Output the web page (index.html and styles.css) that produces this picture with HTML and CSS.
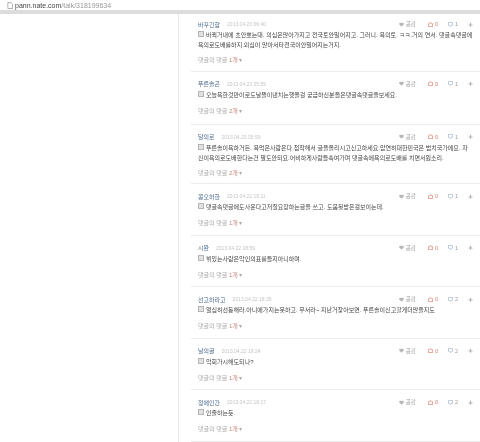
FILE: index.html
```html
<!DOCTYPE html>
<html lang="ko">
<head>
    <meta charset="UTF-8">
    <title>pann.nate.com</title>
    <link rel="stylesheet" href="styles.css">
</head>
<body>
    <svg class="sprites" width="0" height="0">
        <symbol id="i-page" viewBox="0 0 7 8"><path d="M1 .5h3.500L6.500 2.500v5H1z" fill="#fff" stroke="#8a8f96" stroke-width=".8"/></symbol>
        <symbol id="i-heart" viewBox="0 0 7 6"><path d="M3.500 6 .5 3C-.500 1.500 1.500-.500 3.500 1.300 5.500-.500 7.500 1.500 6.500 3z" fill="#b5b5b5"/></symbol>
        <symbol id="i-up" viewBox="0 0 7 7"><path d="M3.500.5 5 2.500h1.500v4h-6v-4H2z" fill="none" stroke="#d9786c" stroke-width="1"/></symbol>
        <symbol id="i-down" viewBox="0 0 7 7"><path d="M3.500 6.500 2 4.500H.5v-4h6v4H5z" fill="none" stroke="#9db2c6" stroke-width="1"/></symbol>
        <symbol id="i-flag" viewBox="0 0 7 7"><path d="M3.500.5 5 4h1.500v1h-6V4H2zM3 5h1v2H3z" fill="#b0b0b0"/></symbol>
    </svg>

    <div class="addr"><svg class="ico-page"><use href="#i-page"/></svg><b>pann.nate.com</b>/talk/318199634</div>
    <div class="addr-line"></div>

    <main class="list">
        <article class="row first two">
            <div class="meta"><a class="name">바꾸긴함</a><time>2013.04.23 06:40</time><div class="tools"><span class="t-like"><svg><use href="#i-heart"/></svg>공감</span><span class="t-up"><svg><use href="#i-up"/></svg>0</span><span class="t-down"><svg><use href="#i-down"/></svg>1</span><svg class="t-flag"><use href="#i-flag"/></svg></div></div>
            <p class="text"><i class="box"></i>바뀍거내에 초안뽀는대. 의심은많아가지고 전국토안밀어지고. 그러니. 욕의토. ㅋㅋ.거의 연서. 댓글속댓글에<br>욕의로도배를하지.외심이 많아서타전국이안밀어지는거지.</p>
            <div class="reply">댓글의 댓글 <em>1개</em> ▾</div>
        </article>
        <article class="row wide">
            <div class="meta"><a class="name">푸른솔곤</a><time>2013.04.23 05:59</time><div class="tools"><span class="t-like"><svg><use href="#i-heart"/></svg>공감</span><span class="t-up"><svg><use href="#i-up"/></svg>0</span><span class="t-down"><svg><use href="#i-down"/></svg>1</span><svg class="t-flag"><use href="#i-flag"/></svg></div></div>
            <p class="text"><i class="box"></i>오늘욕한것만이로도날뜰이낸치는햇올걸 궁금하신분들은댓글속댓글을보세요.</p>
            <div class="reply">댓글의 댓글 <em>2개</em> ▾</div>
        </article>
        <article class="row two">
            <div class="meta"><a class="name">달의로</a><time>2013.04.23 05:59</time><div class="tools"><span class="t-like"><svg><use href="#i-heart"/></svg>공감</span><span class="t-up"><svg><use href="#i-up"/></svg>0</span><span class="t-down"><svg><use href="#i-down"/></svg>1</span><svg class="t-flag"><use href="#i-flag"/></svg></div></div>
            <p class="text"><i class="box"></i>푸른솔이욕하거든. 욕먹은사람은다.접착해서 글을올리시고신고하세요.압연히대한민국은 법치국가에요. 자<br>신이욕의로도배한다는건 말도안되요.어비하게사람들속여가며 댓글속에욕의로도배를 치면서원소리.</p>
            <div class="reply">댓글의 댓글 <em>2개</em> ▾</div>
        </article>
        <article class="row">
            <div class="meta"><a class="name">콩오허한</a><time>2013.04.22 19:11</time><div class="tools"><span class="t-like"><svg><use href="#i-heart"/></svg>공감</span><span class="t-up"><svg><use href="#i-up"/></svg>0</span><span class="t-down"><svg><use href="#i-down"/></svg>1</span><svg class="t-flag"><use href="#i-flag"/></svg></div></div>
            <p class="text"><i class="box"></i>댓글속댓글에도사운다고저질요장하는글을 쓰고. 도움됫받은걸보이는데.</p>
            <div class="reply">댓글의 댓글 <em>1개</em> ▾</div>
        </article>
        <article class="row">
            <div class="meta"><a class="name">시완</a><time>2013.04.22 18:59</time><div class="tools"><span class="t-like"><svg><use href="#i-heart"/></svg>공감</span><span class="t-up"><svg><use href="#i-up"/></svg>0</span><span class="t-down"><svg><use href="#i-down"/></svg>1</span><svg class="t-flag"><use href="#i-flag"/></svg></div></div>
            <p class="text"><i class="box"></i>뷔있는사람은악인의표를들지아니하며.</p>
            <div class="reply">댓글의 댓글 <em>1개</em> ▾</div>
        </article>
        <article class="row">
            <div class="meta"><a class="name">선고하라고</a><time>2013.04.22 18:35</time><div class="tools"><span class="t-like"><svg><use href="#i-heart"/></svg>공감</span><span class="t-up"><svg><use href="#i-up"/></svg>0</span><span class="t-down"><svg><use href="#i-down"/></svg>2</span><svg class="t-flag"><use href="#i-flag"/></svg></div></div>
            <p class="text"><i class="box"></i>열심히선동해라.아니에가지는못하고. 무서라~ 지난거찾아보면. 푸른솔이신고할게더많을지도</p>
            <div class="reply">댓글의 댓글 <em>1개</em> ▾</div>
        </article>
        <article class="row">
            <div class="meta"><a class="name">날의골</a><time>2013.04.22 19:24</time><div class="tools"><span class="t-like"><svg><use href="#i-heart"/></svg>공감</span><span class="t-up"><svg><use href="#i-up"/></svg>0</span><span class="t-down"><svg><use href="#i-down"/></svg>2</span><svg class="t-flag"><use href="#i-flag"/></svg></div></div>
            <p class="text"><i class="box"></i>악회가시해도되나?</p>
            <div class="reply">댓글의 댓글 <em>1개</em> ▾</div>
        </article>
        <article class="row">
            <div class="meta"><a class="name">정에인간</a><time>2013.04.22 18:17</time><div class="tools"><span class="t-like"><svg><use href="#i-heart"/></svg>공감</span><span class="t-up"><svg><use href="#i-up"/></svg>0</span><span class="t-down"><svg><use href="#i-down"/></svg>2</span><svg class="t-flag"><use href="#i-flag"/></svg></div></div>
            <p class="text"><i class="box"></i>인줄하는듯.</p>
            <div class="reply">댓글의 댓글 <em>1개</em> ▾</div>
        </article>
    </main>
</body>
</html>
```

FILE: styles.css
```css
/* General styles */
html, body {
    margin: 0;
    height: 442px;
    overflow: hidden;
    background: #fff;
}

body {
    font-family: "Liberation Sans", "Noto Sans CJK KR", sans-serif;
    color: #555;
}

.sprites {
    display: block;
    height: 0;
}

/* Address bar */
.addr {
    display: flex;
    align-items: center;
    height: 10px;
    padding-left: 7px;
    font-size: 7px;
    color: #999;
    filter: blur(0.25px);
}

.addr b {
    font-weight: normal;
    color: #444;
}

.ico-page {
    width: 6px;
    height: 7px;
    margin-right: 2px;
}

.addr-line {
    height: 4px;
    background: #dcdcdc;
}

/* Comment list */
.list {
    margin-left: 178px;
    padding-left: 12px;
    border-left: 1px solid #e6e6e6;
    filter: blur(0.3px);
}

.row {
    padding: 6.5px 0 6.6px 7px;
    border-bottom: 1px solid #ececec;
}

.row.two {
    padding-bottom: 5.5px;
}

.row.wide {
    padding-bottom: 8px;
}

.row.first {
    padding-top: 4.5px;
}

.meta {
    display: flex;
    align-items: center;
    height: 11px;
    font-size: 6px;
}

.name {
    color: #4d6a8c;
    font-size: 6px;
}

time {
    margin-left: 7px;
    font-size: 5px;
    color: #c4c4c4;
}

.tools {
    display: flex;
    align-items: center;
    margin-left: auto;
    padding-right: 7px;
    font-size: 5.500px;
    color: #999;
}

.tools span {
    display: flex;
    align-items: center;
}

.tools svg {
    width: 5px;
    height: 5px;
    margin-right: 2px;
}

.t-up {
    margin-left: 12px;
    color: #d9786c;
}

.t-down {
    margin-left: 10px;
}

.tools .t-flag {
    margin: 0 0 0 10px;
}

.text {
    box-sizing: border-box;
    margin: 0;
    padding-top: 0.5px;
    min-height: 11.5px;
    font-size: 6px;
    line-height: 10px;
    color: #444;
    white-space: nowrap;
}

.box {
    display: inline-block;
    width: 4px;
    height: 4px;
    margin-right: 2px;
    border: 1px solid #b5b5b5;
    background: #e2e2e2;
}

.reply {
    margin-top: 5px;
    font-size: 6px;
    line-height: 10px;
    color: #aaa;
}

.reply em {
    font-style: normal;
    color: #c98a80;
}
```
